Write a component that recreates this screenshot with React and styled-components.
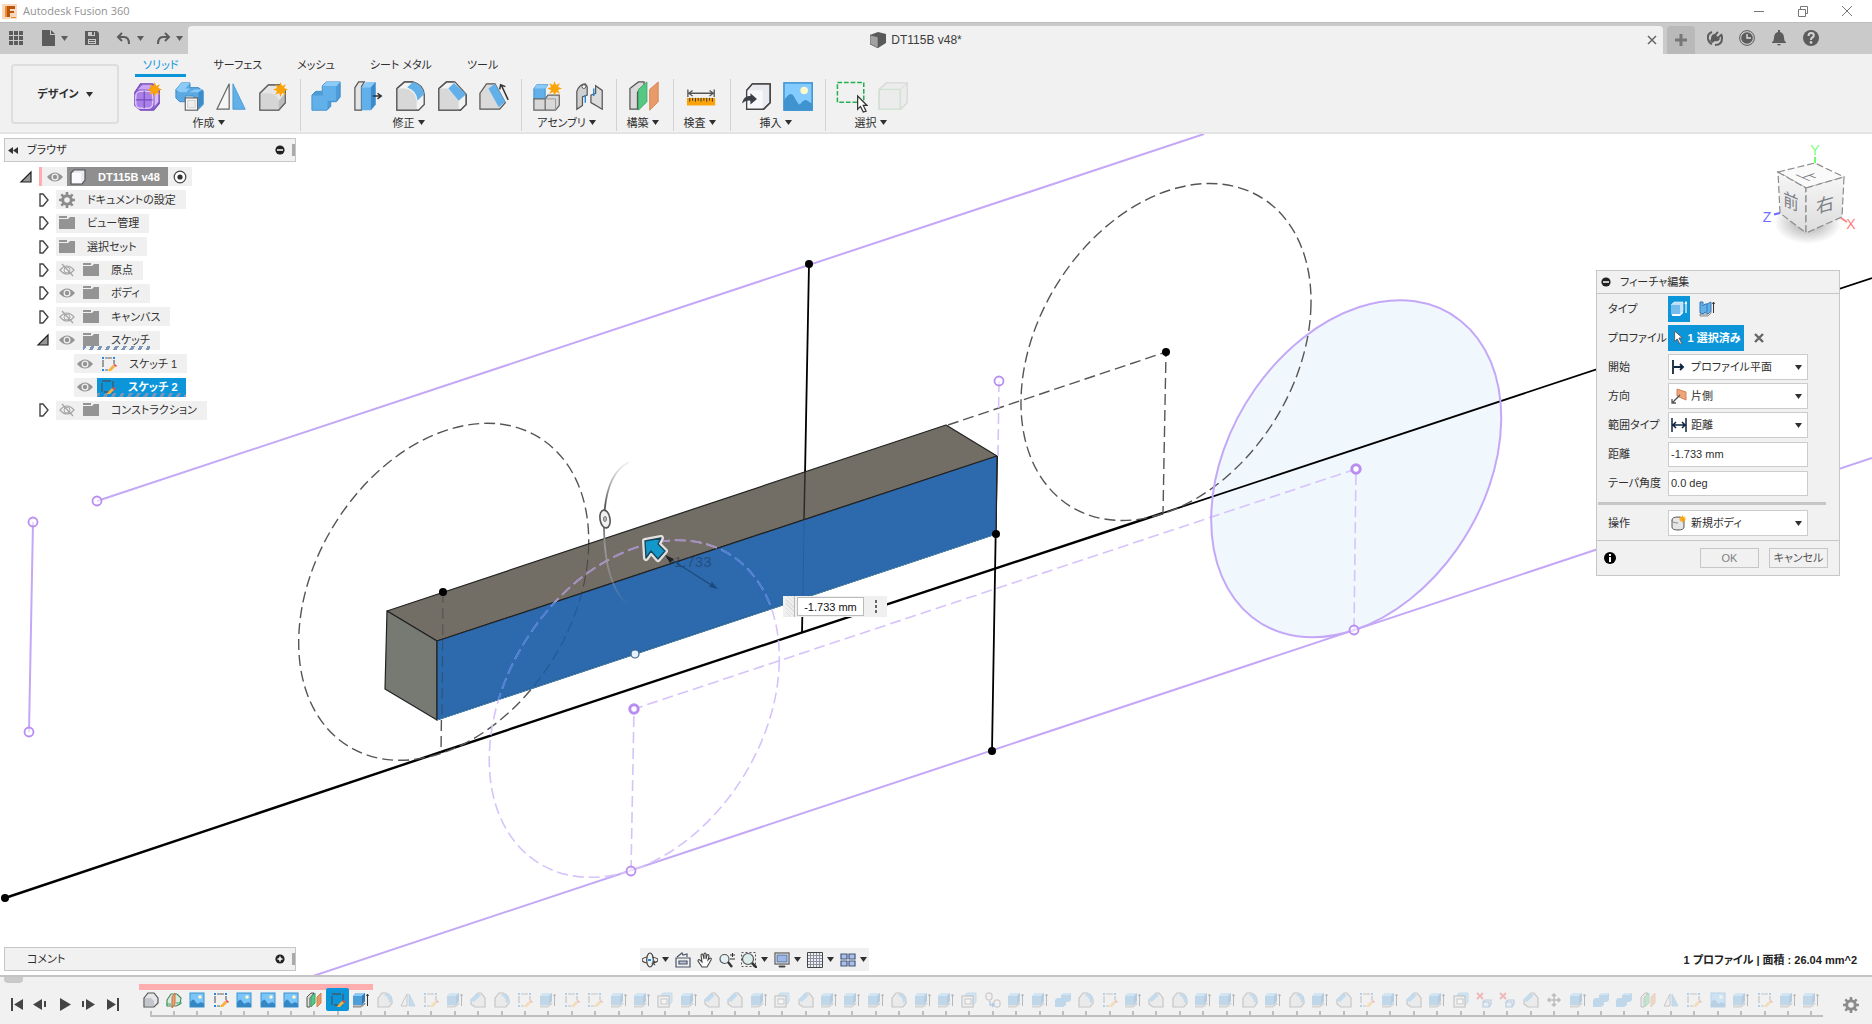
import React from "react";
import styled, { createGlobalStyle, css } from "styled-components";

const c = {
  blue: "#0c96d9",
  bar: "#cacaca",
  panel: "#f1f1f1",
  line: "#c6c6c6",
  text: "#2f2f2f",
  icon: "#5c5c5c",
  purple: "#c4a8f7",
  purpleDark: "#b98df2",
  pink: "#ffaeb0",
};

const Global = createGlobalStyle`
  *, *::before, *::after { box-sizing: border-box; }
  body {
    margin: 0;
    background: #fff;
    color: ${c.text};
    font: 11px/16px "Liberation Sans", "Noto Sans CJK JP", sans-serif;
    font-feature-settings: "palt";
  }
  button, input, select { font: inherit; color: inherit; font-feature-settings: inherit; }
  button { padding: 0; border: 0; background: none; display: inline-flex; align-items: center; justify-content: center; }
  svg { display: block; flex: none; }
`;

/* ---------- icons ---------- */

const Burst = ({ x, y, r }) => {
  const pts = Array.from({ length: 16 }, (_, i) => {
    const a = (i * Math.PI) / 8 - Math.PI / 2;
    const d = i % 2 ? r * 0.5 : r;
    return `${(x + d * Math.cos(a)).toFixed(2)},${(y + d * Math.sin(a)).toFixed(2)}`;
  });
  return <polygon points={pts.join(" ")} fill="#fba40a" />;
};

const big = {
  form: (
    <>
      <path d="M3 12 9 3h13l7 6v15l-6 7H9l-6-5z" fill="#8d5fd0" stroke="#7a4bbd" strokeWidth="1.200" />
      <path d="M6 9 11 4h11l-4 5z" fill="#c9a6f7" />
      <rect x="4" y="11" width="18" height="18" rx="5" fill="#a97fe8" stroke="#dcc6fb" strokeWidth="1.6" />
      <path d="M13 11v18M4 20h18" stroke="#7a4bbd" strokeWidth="1.3" />
      <path d="M24 13v14l4-5V12z" fill="#d7bdf9" />
      <Burst x={24} y={9} r={8} />
    </>
  ),
  derive: (
    <>
      <path d="M2 9 8 2h9v5h9l5 4v14l-5 5h-5V16h-9v6H6l-4-4z" fill="#5ba9e2" stroke="#3d8cca" />
      <path d="M2 9 8 2h9l-5 6h5l-4 4H6z" fill="#8ccaf8" />
      <path d="M16 12h10l5-3h-9z" fill="#8ccaf8" />
      <path d="M26 12v17l5-5V9z" fill="#3d8cca" />
      <rect x="12" y="18" width="13" height="13" fill="#fff" stroke="#666" strokeWidth="1.3" />
      <rect x="14.500" y="20.500" width="8" height="8" fill="#eee" stroke="#ccc" />
    </>
  ),
  mirror: (
    <>
      <path d="M14 3v27H1z" fill="#f6f6f6" stroke="#666" strokeWidth="1.3" />
      <path d="M18 3v27h13z" fill="#62b0e8" stroke="#4b9cd8" />
    </>
  ),
  newBody: (
    <>
      <path d="M2 13 11 4h12l6 6v13l-7 8H2z" fill="#e6e6e6" stroke="#666" strokeWidth="1.3" />
      <path d="M2 13h11q8 2 9 8v10H2z" fill="#d5d5d5" />
      <path d="M22 21l7-8v10l-7 8z" fill="#bcbcbc" />
      <path d="M2 13 11 4h12l6 6v13l-7 8H2z" fill="none" stroke="#666" strokeWidth="1.3" />
      <Burst x={24} y={9} r={8} />
    </>
  ),
  combine: (
    <>
      <path d="M1 15 5 11h7V5l4-4h15v16l-4 5h-6v5l-4 4H1z" fill="#4d9cd8" stroke="#3d8cca" />
      <path d="M1.500 15.500h11V6h14v15h-9v9.500h-16z" fill="#62b0ea" />
      <path d="M12 5.500 16 1h15l-4 4.500z" fill="#8ccaf8" />
    </>
  ),
  press: (
    <>
      <path d="M2 7 6 1h6L9 6v25H2z" fill="#e4e4e4" stroke="#555" strokeWidth="1.3" />
      <path d="M9 7 14 1h10v24l-5 6H9z" fill="#62b0ea" />
      <path d="M9 7 14 1h10l-5 6z" fill="#8ccaf8" />
      <path d="M19 7l5-6v24l-5 6z" fill="#3d8cca" />
      <path d="M21 16h8m-3-3 4 3-4 3" stroke="#333" strokeWidth="1.6" fill="none" />
    </>
  ),
  fillet: (
    <>
      <path d="M2 8 10 1h9q11 3 12 13v11l-6 6H2z" fill="#f3f3f3" stroke="#555" strokeWidth="1.3" />
      <path d="M2 8h9q11 3 12 13v10H2z" fill="#d8d8d8" />
      <path d="M13 7 19 1q11 3 12 13l-7 7Q23 10 13 7z" fill="#62b0ea" />
      <path d="M24 21l7-7v11l-6 6h-1z" fill="#f4f4f4" />
      <path d="M2 8 10 1h9M31 14v11l-6 6H2V8" fill="none" stroke="#555" strokeWidth="1.3" />
    </>
  ),
  chamfer: (
    <>
      <path d="M2 8 10 1h9l12 13v11l-6 6H2z" fill="#f3f3f3" stroke="#555" strokeWidth="1.3" />
      <path d="M2 8h9l12 13v10H2z" fill="#d8d8d8" />
      <path d="M12 8 18 2l13 12-8 7z" fill="#62b0ea" />
      <path d="M2 8 10 1h8M31 14v11l-6 6H2V8" fill="none" stroke="#555" strokeWidth="1.3" />
    </>
  ),
  draft: (
    <>
      <path d="M1 13 8 3h9l11 20-6 7H1z" fill="#dadada" stroke="#555" strokeWidth="1.3" />
      <path d="M10 8 17 3l11 19-7 6z" fill="#62b0ea" />
      <path d="M31 20 24 5m-2 4 1-5 5 2" fill="none" stroke="#333" strokeWidth="1.6" />
    </>
  ),
  component: (
    <>
      <path d="M2 8 5 4h12l-3 4v12H2z" fill="#62b0ea" stroke="#3d8cca" />
      <path d="M2 8 5 4h12l-3 4z" fill="#8ccaf8" />
      <path d="M2 19h12V31H2zM14 19l3-4h12v11l-4 5H14z" fill="#d8d8d8" stroke="#666" strokeWidth="1.3" />
      <path d="M14 19h11v12" fill="none" stroke="#999" />
      <Burst x={24} y={8} r={8} />
    </>
  ),
  joint: (
    <>
      <path d="M3 30V11q3-8 9-8l2 3v9l-5 2v9z" fill="#cfcfcf" stroke="#555" strokeWidth="1.3" />
      <circle cx="10.500" cy="6" r="2" fill="#fff" stroke="#555" />
      <path d="M30 30V10l-7-5v8l-5 2v8z" fill="#dcdcdc" stroke="#555" strokeWidth="1.3" />
      <path d="M12 15v8M21 8v8" stroke="#1e88e5" strokeWidth="1.5" />
    </>
  ),
  plane: (
    <>
      <path d="M1 8 10 1h6v4L9 12v18H1z" fill="#dadada" stroke="#555" strokeWidth="1.3" />
      <path d="M10 9 19 1v21l-9 9z" fill="#57c784" stroke="#39a968" />
      <path d="M22 9 31 1v21l-9 9z" fill="#e89b69" stroke="#d58351" />
    </>
  ),
  measure: (
    <>
      <path d="M2 9v8M30 9v8M3 13h26M7 10l-4 3 4 3M25 10l4 3-4 3" fill="none" stroke="#555" strokeWidth="1.4" />
      <rect x="1" y="18" width="30" height="8" fill="#fba40a" />
      <path d="M4 18v4M7 18v3M10 18v4M13 18v3M16 18v4M19 18v3M22 18v4M25 18v3M28 18v4" stroke="#333" />
    </>
  ),
  insert: (
    <>
      <path d="M6 10 12 3h19v20l-7 7H6z" fill="#e9eaf0" stroke="#444" strokeWidth="1.4" />
      <path d="M6 10h17v20H6z" fill="#f8f8fb" />
      <path d="M6 10 12 3h19v20l-7 7H6z" fill="none" stroke="#444" strokeWidth="1.4" />
      <path d="M1 24q2-9 9-8v-3l7 6-7 6v-4q-5-1-9 3z" fill="#3b3f46" />
    </>
  ),
  image: (
    <>
      <rect x="1" y="2" width="30" height="29" fill="#84cbff" stroke="#3b93d0" strokeWidth="1.600" />
      <circle cx="22.500" cy="10" r="4" fill="#fdf8c8" />
      <path d="M1 21Q8 9 12 17t6 8q5-7 8-4 3 2 5 3v7H1z" fill="#3f93cf" />
    </>
  ),
  select: (
    <>
      <rect x="1.500" y="1.500" width="28" height="21" fill="none" stroke="#23b04e" strokeWidth="1.600" strokeDasharray="5 2" />
      <path d="M23 16v14l3-3 3 6 3-1-3-6h4z" fill="#fff" stroke="#333" strokeWidth="1.300" />
    </>
  ),
  ghostBox: (
    <>
      <path d="M1 9 9 2h22v21l-7 7H1z" fill="#ececec" stroke="#d8d8d8" strokeWidth="1.400" />
      <path d="M24 9v21M24 9l7-7" stroke="#d8d8d8" />
      <rect x="1.500" y="9" width="22" height="21" fill="#ececec" stroke="#cfe3d3" strokeWidth="1.400" />
    </>
  ),
};

const small = {
  base: (
    <>
      <path d="M1 6 5 1h6l4 5v5l-4 4H1z" fill="#e4e6ea" stroke="#555" strokeWidth="1.200" />
      <path d="M2 6h6l3 3v5H2z" fill="#c3c6cc" />
    </>
  ),
  split: (
    <>
      <path d="M1 8 5 2h6l4 4-1 6-4 2H1z" fill="#d9ece0" stroke="#4b8c67" strokeWidth="1.200" />
      <path d="M6 5l3-4v11l-3 4z" fill="#e8a27a" stroke="#c9723d" />
      <path d="M0 12h5M10 11h6" stroke="#39a968" strokeWidth="1.200" />
    </>
  ),
  image: (
    <>
      <rect x="1" y="1" width="14" height="14" fill="#7cc5fb" stroke="#3b93d0" />
      <circle cx="11" cy="5" r="1.800" fill="#fdf8c8" />
      <path d="M1 11q3-6 5-2t4 2q3-2 5 1v3H1z" fill="#3487c4" />
    </>
  ),
  sketch: (
    <>
      <path d="M4 2h7M4 14h3M2 4v7M13 4v4" fill="none" stroke="#666" strokeWidth="1.200" />
      <path d="M1 1h2v2H1zM12 1h2v2h-2zM1 13h2v2H1z" fill="#1e88e5" />
      <path d="M7 15l1-2 4-4 2 2-4 4z" fill="#f7b13c" />
      <path d="M12 9l2-1 2 2-1 1z" fill="#e84a4a" />
    </>
  ),
  sketchOn: (
    <>
      <rect x="2" y="2" width="11" height="11" fill="none" stroke="#41596c" strokeWidth="1.300" strokeDasharray="9 2" />
      <path d="M7 15l1-2 4-4 2 2-4 4z" fill="#f7b13c" />
      <path d="M12 9l2-1 2 2-1 1z" fill="#e84a4a" />
    </>
  ),
  plane: (
    <>
      <path d="M1 5 5 1h3L4 6v9H1z" fill="#ddd" stroke="#555" />
      <path d="M5 5 9 1v10l-4 4z" fill="#57c784" stroke="#39a968" />
      <path d="M11 5 15 1v10l-4 4z" fill="#e89b69" stroke="#d58351" />
    </>
  ),
  extrude: (
    <>
      <path d="M0 14h8l4-3v1l-4 3H0z" fill="#ddd" stroke="#777" strokeWidth=".8" />
      <path d="M0 4 3 1h9v8l-3 4H0z" fill="#4e9ed9" />
      <path d="M0 4 3 1h9L9 4z" fill="#8ccaf8" />
      <path d="M9 4l3-3v8l-3 4z" fill="#3479b5" />
      <path d="M14.500 14V3M13.500 4l1-2 1 2" stroke="#333" fill="none" strokeWidth="1" />
    </>
  ),
  fillet: (
    <>
      <path d="M1 6 5 1h4q6 2 6 8v2l-3 4H1z" fill="#dcdcdc" stroke="#666" strokeWidth="1.200" />
      <path d="M7 3 10 1q5 2 5 8l-3 2q0-6-5-8z" fill="#5ba9e2" />
    </>
  ),
  chamfer: (
    <>
      <path d="M1 8 8 1h3l4 5v9H5l-4-3z" fill="#e0e0e0" stroke="#666" strokeWidth="1.200" />
      <path d="M0 8 7 1l4 2-7 7z" fill="#5ba9e2" />
    </>
  ),
  mirror: (
    <>
      <path d="M7 2v12H1z" fill="#eee" stroke="#666" />
      <path d="M9 2v12h6z" fill="#5ba9e2" stroke="#4b9cd8" />
    </>
  ),
  shell: (
    <>
      <path d="M4 3 6 1h9v9l-3 3V4z" fill="#8ccaf8" stroke="#4b9cd8" strokeWidth=".8" />
      <rect x="1" y="4" width="11" height="11" fill="#eee" stroke="#666" strokeWidth="1.200" />
      <rect x="4" y="7" width="6" height="5" fill="#fff" stroke="#666" />
    </>
  ),
  pattern: (
    <g fill="none" stroke="#555">
      <rect x="1" y="1" width="6" height="7" rx="2" />
      <rect x="9" y="8" width="6" height="7" rx="2" />
      <path d="M5 9v4h3M7 11l2 2-2 2" stroke="#1e74c8" strokeWidth="1.300" />
    </g>
  ),
  combine: (
    <>
      <path d="M0 8 2 6h4V3l3-2h7v7l-2 2h-3v3l-3 2H0z" fill="#4e9ed9" />
      <path d="M6 3l3-2h7l-2 2z" fill="#8ccaf8" />
    </>
  ),
  remove: (
    <>
      <path d="M1 1l6 6M7 1 1 7" stroke="#e33" strokeWidth="1.800" />
      <path d="M7 10l2-2h6v4l-2 3H7z" fill="#cfe6f8" stroke="#3d7fb5" strokeWidth="1.200" />
      <path d="M7 10h6v5" fill="none" stroke="#3d7fb5" />
    </>
  ),
  move: <path d="M8 2v12M2 8h12M6 4l2-2 2 2M6 12l2 2 2-2M4 6 2 8l2 2M12 6l2 2-2 2" fill="none" stroke="#444" strokeWidth="1.500" />,
  grid: <path d="M1 1h4v4H1zM6 1h4v4H6zM11 1h4v4h-4zM1 6h4v4H1zM6 6h4v4H6zM11 6h4v4h-4zM1 11h4v4H1zM6 11h4v4H6zM11 11h4v4h-4z" fill="#5c5c5c" />,
  file: <path d="M2 0h8v5h5v11H2zM11 0l4 4h-4z" fill="#5c5c5c" />,
  save: (
    <>
      <path d="M1 1h12l2 2v12H1z" fill="#5c5c5c" />
      <path d="M4 2h7v4H4zM4 9h8v5H4z" fill="#cacaca" />
      <path d="M8 2h2v3H8zM5 10h6v1H5zM5 12h6v1H5z" fill="#5c5c5c" />
    </>
  ),
  undo: <path d="M6 3 2 7l4 4M2 7h6q5 0 5 7" fill="none" stroke="#5c5c5c" strokeWidth="2" />,
  redo: <path d="M10 3l4 4-4 4M14 7H8q-5 0-5 7" fill="none" stroke="#5c5c5c" strokeWidth="2" />,
  cubeDark: (
    <>
      <path d="M0 3 8 0l8 2v9l-8 5-8-4z" fill="#5a5a5a" />
      <path d="M0 3l8 2v11l-8-4z" fill="#a2a2a2" stroke="#555" strokeWidth=".6" />
    </>
  ),
  close: <path d="M4 4l8 8M12 4l-8 8" stroke="#666" strokeWidth="1.500" />,
  clear: <path d="M4 4l8 8M12 4l-8 8" stroke="#666" strokeWidth="2.400" />,
  plus: <path d="M8 2v12M2 8h12" stroke="#777" strokeWidth="3" />,
  plug: (
    <>
      <path d="M5 2Q0 4 1 9q1 4 4 5M8 15q7 0 7-7 0-2-1-4" fill="none" stroke="#5c5c5c" strokeWidth="2" />
      <path d="M4 9q0-5 4-5l5 5q-2 3-5 2l-3 2-2-2z" fill="#5c5c5c" />
      <path d="M8 5l3-3M11 8l3-3" stroke="#5c5c5c" strokeWidth="1.800" />
    </>
  ),
  clock: (
    <>
      <circle cx="8" cy="8" r="7.400" fill="none" stroke="#5c5c5c" />
      <circle cx="8" cy="8" r="5.800" fill="#5c5c5c" />
      <path d="M8 4v4h4" fill="none" stroke="#ddd" strokeWidth="1.400" />
    </>
  ),
  bell: <path d="M7 0h2v2q4 1 4 6 0 3 2 4v1H1v-1q2-1 2-4 0-5 4-6zM6 14h4q-2 3-4 0z" fill="#5c5c5c" />,
  help: (
    <>
      <circle cx="8" cy="8" r="8" fill="#5c5c5c" />
      <path d="M5.500 6q0-3 2.700-3 2.600 0 2.600 2.400 0 1.300-1.400 2T8 10" fill="none" stroke="#d5d5d5" strokeWidth="2" />
      <circle cx="8" cy="12.400" r="1.300" fill="#d5d5d5" />
    </>
  ),
  min: <path d="M3 8.500h10" stroke="#777" />,
  restore: <path d="M3.500 6.500h7v7h-7zM5.500 6V3.500h7v7H11" fill="none" stroke="#777" />,
  winClose: <path d="M3 3l10 10M13 3 3 13" stroke="#777" />,
  eye: (
    <>
      <path d="M0 8q8-9 16 0-8 9-16 0z" fill="#949494" />
      <circle cx="8" cy="8" r="3.500" fill="#f0f0f0" />
      <circle cx="8" cy="8" r="2.200" fill="#949494" />
    </>
  ),
  eyeOff: (
    <>
      <path d="M1 8q7-8 14 0-7 8-14 0z" fill="none" stroke="#a5a5a5" strokeWidth="1.200" />
      <circle cx="8" cy="8" r="3" fill="none" stroke="#a5a5a5" />
      <path d="M3 2l11 12" stroke="#a5a5a5" strokeWidth="1.300" />
    </>
  ),
  folder: <path d="M0 1h8v2H0zM0 4h9l2-2h5v12H0z" fill="#949494" />,
  box: (
    <>
      <path d="M1 4 4 1h11v10l-3 4H1z" fill="#e9ebf2" stroke="#555" strokeWidth="1.200" />
      <rect x="2" y="4" width="9" height="10" fill="#fafafc" />
    </>
  ),
  gear: (
    <>
      <circle cx="8" cy="8" r="4.300" fill="none" stroke="#8c8c8c" strokeWidth="3" />
      <path d="M8 0v4M8 12v4M0 8h4M12 8h4M2.300 2.300l2.500 2.500M11.200 11.200l2.500 2.500M2.300 13.700l2.500-2.500M11.200 4.800l2.500-2.500" stroke="#8c8c8c" strokeWidth="2.600" />
    </>
  ),
  closed: <path d="M5 2h3l5 6-5 6H5z" fill="#fff" stroke="#444" strokeWidth="1.400" />,
  open: <path d="M13 3v10H3z" fill="#999" stroke="#222" strokeWidth="1.200" />,
  radio: (
    <>
      <circle cx="8" cy="8" r="5.800" fill="#fff" stroke="#444" strokeWidth="1.200" />
      <circle cx="8" cy="8" r="2.600" fill="#333" />
    </>
  ),
  rewind: <path d="M8 5v7L3 8.500zM13 5v7L8 8.500z" fill="#333" />,
  minus: (
    <>
      <circle cx="8" cy="8" r="4.600" fill="#222" />
      <path d="M5 8h6" stroke="#fff" strokeWidth="1.500" />
    </>
  ),
  add: (
    <>
      <circle cx="8" cy="8" r="4.600" fill="#222" />
      <path d="M5.500 8h5M8 5.500v5" stroke="#fff" strokeWidth="1.500" />
    </>
  ),
  info: (
    <>
      <circle cx="8" cy="8" r="6" fill="#000" />
      <path d="M7 4h2v2H7zM7 7h2v5H7z" fill="#fff" />
    </>
  ),
  start: <path d="M2 1v14M3 8h9M9 5l3 3-3 3" fill="none" stroke="#0f2540" strokeWidth="1.800" />,
  direction: (
    <>
      <path d="M6 1l9 3v8L6 8z" fill="#eda57c" stroke="#d58351" />
      <path d="M9 7 1 15M1 11v4h4" fill="none" stroke="#555" strokeWidth="1.300" />
    </>
  ),
  extent: <path d="M1 1v14M15 1v14M2 8h12M5 5 2 8l3 3M11 5l3 3-3 3" fill="none" stroke="#0f2540" strokeWidth="1.500" />,
  body: (
    <>
      <path d="M1 5q0-3 6-3t6 3v7q0 3-6 3t-6-3z" fill="#e6e6e6" stroke="#555" />
      <path d="M1 5q0 3 6 3" fill="none" stroke="#888" />
      <Burst x={11.5} y={4} r={4} />
    </>
  ),
  cursor: <path d="M3 0v12l3-3 3 6 2-1-3-6h4z" fill="#fff" stroke="#555" />,
  thin: (
    <>
      <path d="M1 13h8l3-3v2l-3 3H1z" fill="#ddd" stroke="#777" strokeWidth=".8" />
      <path d="M1 1h3v4l2-2h2l4-2v9l-3 3-3-2-2 2-3-1z" fill="#62b0ea" stroke="#3479b5" />
      <path d="M8 3v8" stroke="#3479b5" />
      <path d="M14.500 12V2M13.500 3l1-2 1 2" stroke="#333" fill="none" />
    </>
  ),
  extrudeOn: (
    <>
      <path d="M1 13h8l3-3v2l-3 3H1z" fill="#fff" />
      <path d="M0 4 3 1h9v9l-3 3H0z" fill="#bfe0f8" stroke="#e9f5fd" strokeWidth=".6" />
      <path d="M0 4h9v9H0z" fill="#74bbee" />
      <path d="M15 12V2M14 3l1-2 1 2" stroke="#fff" fill="none" strokeWidth="1.200" />
    </>
  ),
  first: <path d="M2 2h2v13H2zM14 3v11L5 8.500z" fill="#444" />,
  back: <path d="M9 3v11L0 8.500zM11 5h2v6h-2z" fill="#444" />,
  play: <path d="M3 2v13l11-6.500z" fill="#444" />,
  next: <path d="M5 3v11l9-5.500zM1 5h2v6H1z" fill="#444" />,
  last: <path d="M12 2h2v13h-2zM2 3v11l9-5.500z" fill="#444" />,
  orbit: (
    <g fill="none" stroke="#444" strokeWidth="1.200">
      <ellipse cx="8" cy="8" rx="3.300" ry="7" />
      <path d="M5 5Q0 6 0 8t5 3M10 5q6 1 6 3t-5 3l2-2M11 11l2 2" />
      <path d="M6 7h3v2H6z" fill="#1e88e5" stroke="none" />
    </g>
  ),
  camera: (
    <g fill="none" stroke="#4a5568" strokeWidth="1.200">
      <path d="M1 6h14v9H1zM2 5l5-4 1 2 4-1v3" />
      <path d="M4 9h8v3H4z" fill="#b9c2d0" />
    </g>
  ),
  hand: <path d="M5 15 1 9q0-2 2-1l2 2-1-7q1-2 2 0l1 4V2q1-2 2 0v5l1-4q2-1 2 1l-1 4 2-2q2 0 1 2l-4 7z" fill="#fff" stroke="#444" strokeWidth="1.100" />,
  zoom: (
    <>
      <circle cx="5.500" cy="7" r="4.500" fill="#e4f1f6" stroke="#555" strokeWidth="1.200" />
      <path d="M9 10l4 5" stroke="#333" strokeWidth="2.400" />
      <path d="M11 3h5M13.500 1v4M11 7h5" stroke="#333" />
    </>
  ),
  zoomWindow: (
    <>
      <rect x=".5" y=".5" width="14" height="14" fill="none" stroke="#555" strokeDasharray="2 2" />
      <circle cx="7" cy="7" r="5.500" fill="#d9edea" stroke="#555" strokeWidth="1.200" />
      <path d="M11 11l5 5" stroke="#333" strokeWidth="2.600" />
    </>
  ),
  display: (
    <>
      <rect x="1" y="1" width="14" height="11" fill="#fff" stroke="#555" strokeWidth="1.200" />
      <rect x="3" y="3" width="10" height="7" fill="#9db8e6" stroke="#55709c" />
      <path d="M5 14h6v1H5z" stroke="#555" />
    </>
  ),
  gridNav: (
    <>
      <path d="M3.500 1v14M6.500 1v14M9.500 1v14M12.500 1v14M1 3.500h14M1 6.500h14M1 9.500h14M1 12.500h14" stroke="#8a8fa0" />
      <path d="M.5.500h15v15H.5z" fill="none" stroke="#444" />
    </>
  ),
  views: <path d="M1 2h6v5H1zM9 2h6v5H9zM1 9h6v5H1zM9 9h6v5H9z" fill="#a9c0ea" stroke="#44587e" strokeWidth="1.200" />,
};

const Icon = ({ name, size = 16 }) => (
  <svg width={size} height={size} viewBox="0 0 16 16" aria-hidden="true">{small[name]}</svg>
);
const BigIcon = ({ name }) => (
  <svg width="32" height="32" viewBox="0 0 34 34" aria-hidden="true">{big[name]}</svg>
);
const Caret = () => (
  <svg width="7" height="5" viewBox="0 0 7 5" aria-hidden="true"><path d="M0 0h7L3.500 5z" fill="currentColor" /></svg>
);

/* ---------- frame ---------- */

const Page = styled.div`
  display: flex;
  flex-direction: column;
  height: 100vh;
  overflow: hidden;
`;

const TitleBar = styled.header`
  display: flex;
  align-items: center;
  height: 22px;
  padding: 0 3px 0 2px;
  color: #929292;
  font-family: "Open Sans", sans-serif;
`;
const AppMark = styled.svg`
  width: 15px;
  height: 15px;
`;
const AppName = styled.h1`
  flex: 1;
  margin: 0 0 0 6px;
  font-size: 11px;
  font-weight: 400;
`;
const WindowButton = styled.button`
  width: 44px;
  height: 20px;
`;

const DocumentBar = styled.div`
  display: flex;
  align-items: stretch;
  height: 32px;
  padding-top: 3px;
  background: ${c.bar};
  border-top: 1px solid #bdbdbd;
  color: ${c.icon};
`;
const QuickAccess = styled.div`
  display: flex;
  align-items: center;
  gap: 16px;
  width: 188px;
  padding: 0 0 4px 8px;
`;
const QuickPair = styled.div`
  display: flex;
  gap: 11px;
`;
const QuickButton = styled.button`
  gap: 5px;
`;
const DocumentTab = styled.div`
  flex: 1;
  display: flex;
  align-items: center;
  padding-right: 3px;
  background: ${c.panel};
  border-radius: 4px 4px 0 0;
`;
const DocumentName = styled.div`
  flex: 1;
  display: flex;
  align-items: center;
  justify-content: center;
  gap: 5px;
  font-size: 12px;
  color: #3c3c3c;
`;
const NewTab = styled.button`
  width: 28px;
  margin: 0 12px 0 4px;
  background: #b9b9b9;
  border-radius: 4px 4px 0 0;
`;
const AccountTools = styled.div`
  display: flex;
  align-items: center;
  gap: 16px;
  padding: 0 53px 4px 0;
`;

const Ribbon = styled.section`
  display: flex;
  height: 80px;
  padding: 1px 11px 0;
  background: ${c.panel};
  border-bottom: 2px solid #e4e4e4;
`;
const Workspace = styled.button`
  gap: 7px;
  width: 108px;
  height: 60px;
  margin-top: 9px;
  border: 2px solid #dedede;
  border-radius: 4px;
  font-weight: 700;
`;
const RibbonMain = styled.div`
  display: flex;
  flex-direction: column;
  padding-left: 3px;
`;
const TabList = styled.nav`
  display: flex;
  gap: 19px;
  padding-left: 13px;
`;
const RibbonTab = styled.button`
  height: 22px;
  padding: 0 8px;
  border-bottom: 3px solid ${(p) => (p.$on ? c.blue : "transparent")};
  color: ${(p) => (p.$on ? c.blue : c.text)};
`;
const Groups = styled.div`
  display: flex;
  padding-top: 2px;
`;
const Group = styled.div`
  display: flex;
  flex-direction: column;
  align-items: center;
  min-width: 57px;
  height: 52px;
  padding: 0 5px;
  & + & { border-left: 1px solid #d2d2d2; }
`;
const Tools = styled.div`
  display: flex;
`;
const Tool = styled.button`
  width: 42px;
  height: 35px;
`;
const GroupMenu = styled.button`
  gap: 3px;
  height: 17px;
  padding-right: 5px;
`;

/* ---------- canvas ---------- */

const Canvas = styled.main`
  position: relative;
  flex: 1;
  min-height: 0;
`;
const Scene = styled.svg`
  position: absolute;
  inset: 0;
  width: 100%;
  height: 100%;
`;
const Dock = styled.aside`
  position: absolute;
  left: 4px;
  width: 292px;
  ${(p) => (p.$bottom ? css`bottom: 4px;` : css`top: 4px;`)}
`;
const DockHeader = styled.div`
  display: flex;
  align-items: center;
  height: 24px;
  background: ${c.panel};
  border: 1px solid ${c.line};
`;
const DockTitle = styled.h2`
  flex: 1;
  margin: 0;
  padding-left: ${(p) => (p.$indent ? "22px" : "6px")};
  font-size: 11px;
  font-weight: 400;
`;
const Grip = styled.span`
  width: 3px;
  height: 12px;
  margin-left: 4px;
  border: 1px solid #aaa;
  border-right-width: 2px;
`;
const Tree = styled.ul`
  display: flex;
  flex-direction: column;
  justify-content: space-between;
  height: 253px;
  margin: 5px 0 0;
  padding: 0;
  list-style: none;
`;
const TreeRow = styled.li`
  display: flex;
  align-items: center;
  height: 19px;
  padding-left: ${(p) => p.$indent}px;
`;
const Chip = styled.div`
  display: flex;
  align-items: center;
  gap: ${(p) => (p.$flush ? 4 : 8)}px;
  height: 19px;
  margin-left: 5px;
  padding: 0 ${(p) => (p.$flush ? 0 : 10)}px 0 3px;
  background: #f0f0f0;
  ${(p) => p.$edited && css`
    padding: 0 4px 0 5px;
    border-left: 3px solid ${c.pink};
  `}
`;
const ItemName = styled.span`
  display: flex;
  align-items: center;
  gap: 12px;
  height: 19px;
  color: ${(p) => (p.$tone ? "#fff" : "#333")};
  background: ${(p) => p.$tone || "none"};
  font-weight: ${(p) => (p.$tone ? 700 : 400)};
  padding: ${(p) => (p.$tone ? "0 8px 0 3px" : 0)};
  ${(p) => p.$hatched && css`
    background-image: repeating-linear-gradient(120deg, #7f95b8 0 3px, transparent 3px 7px);
    background-size: 100% 4px;
    background-position: 0 100%;
    background-repeat: no-repeat;
  `}
`;

const ValueEditor = styled.div`
  position: absolute;
  left: 783px;
  top: 462px;
  display: flex;
  align-items: center;
  width: 104px;
  height: 21px;
  padding-left: 3px;
  background: #f0f0f0;
`;
const ValueHandle = styled.span`
  width: 9px;
  height: 21px;
  margin-right: 2px;
  border-right: 1px solid #bbb;
  background: repeating-linear-gradient(45deg, #ddd 0 1px, #f0f0f0 1px 3px);
`;
const ValueInput = styled.input`
  width: 67px;
  height: 19px;
  margin-right: 10px;
  padding: 0;
  border: 1px solid #bbb;
  background: #fff;
  color: #111;
  text-align: center;
`;

const Dialog = styled.form`
  position: absolute;
  top: 136px;
  right: 32px;
  width: 244px;
  background: ${c.panel};
  border: 1px solid ${c.line};
`;
const DialogTitle = styled.h2`
  display: flex;
  align-items: center;
  gap: 6px;
  height: 23px;
  margin: 0;
  padding-left: 1px;
  border-bottom: 1px solid ${c.line};
  font-size: 11px;
  font-weight: 400;
`;
const Fields = styled.div`
  display: flex;
  flex-direction: column;
  gap: 3px;
  padding: ${(p) => (p.$tight ? "5px 0 4px" : "2px 0 6px")};
`;
const Field = styled.div`
  display: grid;
  grid-template-columns: 60px 140px;
  align-items: center;
  height: 26px;
  padding-left: 11px;
`;
const Controls = styled.div`
  display: flex;
  align-items: center;
`;
const TypeButton = styled.button`
  width: 22px;
  height: 26px;
  margin-right: 6px;
  background: ${(p) => (p.$on ? c.blue : "none")};
`;
const PickButton = styled.button`
  gap: 2px;
  width: 76px;
  height: 26px;
  margin-right: 7px;
  color: #fff;
  font-weight: 700;
  background: ${c.blue};
`;
const SelectBox = styled.div`
  display: flex;
  align-items: center;
  gap: 4px;
  height: 26px;
  padding: 0 5px 0 2px;
  background: #fff;
  border: 1px solid #ccc;
`;
const Select = styled.select`
  flex: 1;
  min-width: 0;
  padding: 0;
  border: 0;
  background: none;
  appearance: none;
`;
const TextInput = styled.input`
  width: 140px;
  height: 25px;
  padding: 0 2px;
  border: 1px solid #ccc;
  background: #fff;
`;
const Divider = styled.hr`
  height: 3px;
  margin: 0 13px 0 1px;
  border: 0;
  background: ${c.line};
`;
const DialogFooter = styled.footer`
  display: flex;
  align-items: center;
  gap: 10px;
  height: 35px;
  padding: 0 11px 0 5px;
  border-top: 1px solid ${c.line};
`;
const Spacer = styled.span`
  flex: 1;
`;
const PushButton = styled.button`
  width: 59px;
  height: 20px;
  border: 1px solid ${c.line};
  color: ${(p) => (p.disabled ? "#808080" : "#555")};
`;

const NavBar = styled.div`
  position: absolute;
  left: 640px;
  bottom: 4px;
  display: flex;
  align-items: center;
  gap: 6px;
  height: 23px;
  padding: 0 2px;
  background: #f0f0f0;
`;
const NavButton = styled.button`
  gap: 4px;
`;
const Status = styled.output`
  position: absolute;
  right: 15px;
  bottom: 7px;
  font-weight: 700;
  color: #222;
`;

/* ---------- timeline ---------- */

const Timeline = styled.footer`
  position: relative;
  display: flex;
  height: 49px;
  background: ${c.panel};
  border-top: 2px solid #c4c4c4;
`;
const Handle = styled.span`
  position: absolute;
  left: 4px;
  top: 0;
  width: 19px;
  height: 6px;
  background: ${c.bar};
  border-radius: 0 0 4px 4px;
`;
const Player = styled.div`
  display: flex;
  align-items: center;
  gap: 8px;
  width: 139px;
  padding: 6px 0 0 9px;
`;
const Track = styled.ol`
  flex: 1;
  display: flex;
  margin: 0;
  padding: 7px 0 0;
  list-style: none;
`;
const Step = styled.li`
  flex: 1;
  min-width: 0;
  display: flex;
  flex-direction: column;
  align-items: center;
  height: 33px;
  border-top: 6px solid ${(p) => (p.$edited ? c.pink : "transparent")};
  background: linear-gradient(#bfbfbf, #bfbfbf) ${(p) => (p.$first ? "right" : "left")} bottom / ${(p) => (p.$first ? "50%" : "100%")} 2px no-repeat;
  &::after { content: ""; width: 2px; height: 6px; margin-top: auto; background: #bfbfbf; }
`;
const StepButton = styled.button`
  width: 23px;
  height: 23px;
  margin-top: -2px;
  opacity: ${(p) => (p.$later ? 0.3 : 1)};
  background: ${(p) => (p.$on ? c.blue : "none")};
  border-radius: 2px;
`;
const Settings = styled.button`
  width: 49px;
  padding: 9px 0 0 6px;
`;

/* ---------- data ---------- */

const tabs = ["ソリッド", "サーフェス", "メッシュ", "シート メタル", "ツール"];
const groups = [
  ["作成", ["form", "derive", "mirror", "newBody"]],
  ["修正", ["combine", "press", "fillet", "chamfer", "draft"]],
  ["アセンブリ", ["component", "joint"]],
  ["構築", ["plane"]],
  ["検査", ["measure"]],
  ["挿入", ["insert", "image"]],
  ["選択", ["select", "ghostBox"]],
];
const tree = [
  { indent: 35, icons: ["gear"], name: "ドキュメントの設定" },
  { indent: 35, icons: ["folder"], name: "ビュー管理" },
  { indent: 35, icons: ["folder"], name: "選択セット" },
  { indent: 35, icons: ["eyeOff", "folder"], name: "原点" },
  { indent: 35, icons: ["eye", "folder"], name: "ボディ" },
  { indent: 35, icons: ["eyeOff", "folder"], name: "キャンバス" },
  { indent: 35, icons: ["eye", "folder"], name: "スケッチ", open: true, hatched: true },
  { indent: 65, icons: ["eye", "sketch"], name: "スケッチ 1", leaf: true },
  { indent: 65, icons: ["eye", "sketchOn"], name: "スケッチ 2", leaf: true, tone: c.blue, hatched: true },
  { indent: 35, icons: ["eyeOff", "folder"], name: "コンストラクション" },
];
const codes = {
  b: "base", s: "split", i: "image", k: "sketch", p: "plane", K: "sketchOn", e: "extrude", f: "fillet",
  m: "mirror", c: "chamfer", h: "shell", t: "pattern", j: "combine", x: "remove", v: "move",
};
const steps = [..."bsikiiipKefmkecfkekkeeheccehceeefeehteejfkecfeefefeckeceh" + "xxcvejjpmkiekee"].map((k) => codes[k]);
const nav = [
  ["orbit", true], ["camera"], ["hand"], ["zoom"], ["zoomWindow", true], ["display", true], ["gridNav", true], ["views", true],
];

/* A circle seen in the sketch plane: centre plus its two projected radii. */
const ringPath = (x, y) => {
  const u = [145, -48];
  const v = [-2.5, 161.5];
  const k = 0.5523;
  const at = (a, b) => `${(x + a * u[0] + b * v[0]).toFixed(1)} ${(y + a * u[1] + b * v[1]).toFixed(1)}`;
  return `M${at(1, 0)}C${at(1, k)} ${at(k, 1)} ${at(0, 1)}C${at(-k, 1)} ${at(-1, k)} ${at(-1, 0)}C${at(-1, -k)} ${at(-k, -1)} ${at(0, -1)}C${at(k, -1)} ${at(1, -k)} ${at(1, 0)}`;
};

const Model = () => (
  <Scene viewBox="0 134 1872 841" preserveAspectRatio="xMidYMid slice" role="img" aria-label="DT115B v48">
    <defs>
      <linearGradient id="fade" x1="0" y1="0" x2="0" y2="1">
        <stop offset="0" stopColor="#888" stopOpacity="0.1" />
        <stop offset=".3" stopColor="#555" />
        <stop offset=".6" stopColor="#999" />
        <stop offset="1" stopColor="#aaa" stopOpacity="0" />
      </linearGradient>
      <linearGradient id="cubeFace" x1="0" y1="0" x2="0" y2="1">
        <stop offset="0" stopColor="#f6f6f6" />
        <stop offset="1" stopColor="#dcdcdc" />
      </linearGradient>
      <radialGradient id="cubeShade">
        <stop offset="0" stopColor="#888" stopOpacity=".8" />
        <stop offset="1" stopColor="#888" stopOpacity="0" />
      </radialGradient>
      <clipPath id="onTop"><path d="M387 611 946 425 997 456 437 641z" /></clipPath>
      <clipPath id="onFront"><path d="M437 641 997 456 996 534 437 720z" /></clipPath>
    </defs>

    <path d={ringPath(1356.2, 468.8)} fill="#f0f8fe" />
    <path d="M97 501 1204 134M33 522 29 732M313 976 1872 458" fill="none" stroke={c.purple} strokeWidth="2" />
    <g fill="none" stroke="#000">
      <path d="M5 898 441 752" strokeWidth="2.400" />
      <path d="M441 752 1163 513" strokeWidth="2.400" />
      <path d="M1163 513 1872 278" strokeWidth="1.800" />
      <path d="M809 264 802 633M997 456 992 751" strokeWidth="1.800" />
    </g>
    <g fill="none" stroke="#555" strokeWidth="1.400" strokeDasharray="11 5">
      <path d={ringPath(1166, 352)} />
      <path d={ringPath(443.7, 591.8)} />
      <path d="M948 425 1166 352 1163 513M443 592 441 752" />
    </g>

    <g stroke="#222" strokeWidth="1.200" strokeLinejoin="round">
      <path d="M387 611 946 425 997 456 437 641z" fill="#726d65" />
      <path d="M387 611 437 641V720L385 689z" fill="#777973" />
      <path d="M437 641 997 456 996 534 437 720z" fill="#2c6aad" />
    </g>
    <path d="M437 720 996 534" stroke="#3f8fd0" />
    <path d="M805 472 804 520" stroke="#2c2b29" strokeWidth="1.500" />
    <path d="M804 520 803 598" stroke="#275f9c" />
    <g fill="none" strokeWidth="1.200" strokeDasharray="11 5">
      <path d="M443 592 442 717" stroke="#333" strokeOpacity=".4" />
      <path d={ringPath(443.7, 591.8)} stroke="#333" strokeOpacity=".6" clipPath="url(#onTop)" />
      <path d={ringPath(443.7, 591.8)} stroke="#1d4f87" strokeOpacity=".6" clipPath="url(#onFront)" />
    </g>

    <g fill="none" strokeDasharray="11 5">
      <g stroke="#d6c3fb" strokeWidth="1.600">
        <path d={ringPath(634.3, 708.8)} />
        <path d="M631 871 634 709 1356 469 1354 630M999 381 998 456" />
      </g>
      <path d={ringPath(634.3, 708.8)} stroke="#a28fc0" strokeWidth="1.800" clipPath="url(#onTop)" />
      <path d={ringPath(634.3, 708.8)} stroke="#4c7fd4" strokeWidth="1.800" clipPath="url(#onFront)" />
    </g>
    <path d={ringPath(1356.2, 468.8)} fill="none" stroke={c.purple} strokeWidth="2" />

    <g>
      {[[5, 898], [809, 264], [1166, 352], [443, 592], [996, 534], [992, 751]].map(([x, y]) => (
        <circle key={`${x}-${y}`} cx={x} cy={y} r="4" fill="#000" />
      ))}
      {[[97, 501], [33, 522], [29, 732], [999, 381], [1354, 630], [631, 871]].map(([x, y]) => (
        <circle key={`${x}-${y}`} cx={x} cy={y} r="4.500" fill="#fff" fillOpacity=".6" stroke={c.purpleDark} strokeWidth="1.800" />
      ))}
      {[[1356, 469], [634, 709]].map(([x, y]) => (
        <circle key={`${x}-${y}`} cx={x} cy={y} r="4.200" fill="#fff" stroke={c.purpleDark} strokeWidth="3" />
      ))}
      <circle cx="635" cy="654" r="4" fill="#e4f2ff" stroke="#41638c" strokeWidth="1.200" />
    </g>

    <path d="M629 462Q603 475 604 530T628 605" fill="none" stroke="url(#fade)" strokeWidth="1.800" />
    <ellipse cx="605" cy="519" rx="5" ry="9" transform="rotate(-10 605 519)" fill="#f0f0f0" stroke="#555" strokeWidth="1.600" />
    <ellipse cx="605" cy="519" rx="1.500" ry="2.500" fill="#bbb" stroke="#777" />
    <path d="M667 557 716 588" stroke="#1c4a80" strokeWidth="1.200" />
    <path d="M718 589 709 587 712 582z" fill="#1c4a80" />
    <path d="M665 555 674 559 670 563z" fill="#222" />
    <text x="669" y="567" fontSize="15" fill="#1e3350" fillOpacity=".5">-1.733</text>
    <path d="M645 541 661 538 658 544 665 551 658 559 651 551 646 558z" fill="#1398cb" stroke="#e4e2de" strokeWidth="6" strokeLinejoin="round" />
    <path d="M645 541 661 538 658 544 665 551 658 559 651 551 646 558z" fill="#1398cb" stroke="#174560" strokeWidth="1.400" strokeLinejoin="round" />

    <ellipse cx="1808" cy="222" rx="34" ry="22" fill="url(#cubeShade)" />
    <g stroke="#8b8b8b" strokeDasharray="7 3" strokeWidth="1.200">
      <path d="M1778 172 1815 163 1844 177 1806 188z" fill="#fafafa" />
      <path d="M1778 172 1806 188V233L1780 213z" fill="url(#cubeFace)" />
      <path d="M1806 188 1844 177 1842 217 1806 233z" fill="url(#cubeFace)" />
    </g>
    <path d="M1815 157v6" stroke="#6dfc6d" strokeWidth="2" />
    <path d="M1774 214.500 1780 213" stroke="#6a6aff" strokeWidth="2" />
    <path d="M1841 218 1847 222" stroke="#ff8585" strokeWidth="2" />
    <g fontFamily="Liberation Sans, Noto Sans CJK JP, sans-serif" textAnchor="middle">
      <g fill="#7b7f86" fontSize="18">
        <text transform="matrix(.85 .35 0 1 1791 208)">前</text>
        <text transform="matrix(1 -.3 0 1 1825 211)">右</text>
        <text transform="matrix(.9 .4 -.85 .3 1803 178)" fontSize="17">上</text>
      </g>
      <text x="1815" y="155" fontSize="14" fill="#7dfb7d">Y</text>
      <text x="1767" y="222" fontSize="14" fill="#6f6fff">Z</text>
      <text x="1851" y="229" fontSize="14" fill="#ff7d7d">X</text>
    </g>
  </Scene>
);

const SelectField = ({ id, label, icon, value }) => (
  <Field>
    <label htmlFor={id}>{label}</label>
    <SelectBox>
      <Icon name={icon} />
      <Select id={id} defaultValue={value}><option>{value}</option></Select>
      <Caret />
    </SelectBox>
  </Field>
);

const FeatureDialog = () => (
  <Dialog onSubmit={(e) => e.preventDefault()}>
    <DialogTitle><Icon name="minus" />フィーチャ編集</DialogTitle>
    <Fields>
      <Field>
        <span>タイプ</span>
        <Controls>
          <TypeButton type="button" $on aria-label="押し出し"><Icon name="extrudeOn" /></TypeButton>
          <TypeButton type="button" aria-label="薄い押し出し"><Icon name="thin" /></TypeButton>
        </Controls>
      </Field>
      <Field>
        <span>プロファイル</span>
        <Controls>
          <PickButton type="button"><Icon name="cursor" size={14} />1 選択済み</PickButton>
          <button type="button" aria-label="クリア"><Icon name="clear" /></button>
        </Controls>
      </Field>
      <SelectField id="start" label="開始" icon="start" value="プロファイル平面" />
      <SelectField id="direction" label="方向" icon="direction" value="片側" />
      <SelectField id="extent" label="範囲タイプ" icon="extent" value="距離" />
      <Field>
        <label htmlFor="distance">距離</label>
        <TextInput id="distance" defaultValue="-1.733 mm" />
      </Field>
      <Field>
        <label htmlFor="taper">テーパ角度</label>
        <TextInput id="taper" defaultValue="0.0 deg" />
      </Field>
    </Fields>
    <Divider />
    <Fields $tight>
      <SelectField id="operation" label="操作" icon="body" value="新規ボディ" />
    </Fields>
    <DialogFooter>
      <Icon name="info" />
      <Spacer />
      <PushButton disabled>OK</PushButton>
      <PushButton type="button">キャンセル</PushButton>
    </DialogFooter>
  </Dialog>
);

const BrowserTree = () => (
  <Dock>
    <DockHeader>
      <Icon name="rewind" />
      <DockTitle>ブラウザ</DockTitle>
      <Icon name="minus" />
      <Grip />
    </DockHeader>
    <Tree>
      <TreeRow $indent={14}>
        <Icon name="open" />
        <Chip $edited $flush>
          <Icon name="eye" />
          <ItemName $tone="#8f8f8f"><Icon name="box" />DT115B v48</ItemName>
          <Icon name="radio" />
        </Chip>
      </TreeRow>
      {tree.map((row) => {
        const last = row.icons[row.icons.length - 1];
        return (
          <TreeRow key={row.name} $indent={row.leaf ? row.indent : row.indent - 4}>
            {!row.leaf && <Icon name={row.open ? "open" : "closed"} />}
            <Chip $flush={!!row.tone}>
              {row.icons.length > 1 && <Icon name={row.icons[0]} />}
              <ItemName $tone={row.tone} $hatched={row.hatched}><Icon name={last} />{row.name}</ItemName>
            </Chip>
          </TreeRow>
        );
      })}
    </Tree>
  </Dock>
);

export default function App() {
  return (
    <Page>
      <Global />
      <TitleBar>
        <AppMark viewBox="0 0 15 15" aria-hidden="true">
          <path d="M0 0h15v15H0z" fill="#f9d9bd" />
          <path d="M5 2h8v3H8v2h4v2H8v4H5z" fill="#b8560c" />
          <path d="M3 2h2v11H3zM9 13h5v1H9z" fill="#f08a30" />
        </AppMark>
        <AppName>Autodesk Fusion 360</AppName>
        <WindowButton aria-label="最小化"><Icon name="min" /></WindowButton>
        <WindowButton aria-label="元に戻す"><Icon name="restore" /></WindowButton>
        <WindowButton aria-label="閉じる"><Icon name="winClose" /></WindowButton>
      </TitleBar>

      <DocumentBar>
        <QuickAccess>
          <QuickButton aria-label="データ パネル"><Icon name="grid" /></QuickButton>
          <QuickButton aria-label="ファイル"><Icon name="file" /><Caret /></QuickButton>
          <QuickButton aria-label="保存"><Icon name="save" /></QuickButton>
          <QuickPair>
            <QuickButton aria-label="元に戻す"><Icon name="undo" /><Caret /></QuickButton>
            <QuickButton aria-label="やり直し"><Icon name="redo" /><Caret /></QuickButton>
          </QuickPair>
        </QuickAccess>
        <DocumentTab>
          <DocumentName><Icon name="cubeDark" />DT115B v48*</DocumentName>
          <button aria-label="タブを閉じる"><Icon name="close" /></button>
        </DocumentTab>
        <NewTab aria-label="新しいデザイン"><Icon name="plus" /></NewTab>
        <AccountTools>
          <button aria-label="拡張機能"><Icon name="plug" /></button>
          <button aria-label="ジョブ ステータス"><Icon name="clock" /></button>
          <button aria-label="通知"><Icon name="bell" /></button>
          <button aria-label="ヘルプ"><Icon name="help" /></button>
        </AccountTools>
      </DocumentBar>

      <Ribbon>
        <Workspace>デザイン<Caret /></Workspace>
        <RibbonMain>
          <TabList>
            {tabs.map((t, i) => <RibbonTab key={t} $on={i === 0}>{t}</RibbonTab>)}
          </TabList>
          <Groups>
            {groups.map(([label, tools]) => (
              <Group key={label}>
                <Tools>{tools.map((t) => <Tool key={t} aria-label={label}><BigIcon name={t} /></Tool>)}</Tools>
                <GroupMenu>{label}<Caret /></GroupMenu>
              </Group>
            ))}
          </Groups>
        </RibbonMain>
      </Ribbon>

      <Canvas>
        <Model />
        <BrowserTree />
        <ValueEditor>
          <ValueHandle />
          <ValueInput aria-label="距離" defaultValue="-1.733 mm" />
          <svg width="4" height="13" viewBox="0 0 4 13" aria-hidden="true">
            <path d="M1 0h2v3H1zM1 5h2v3H1zM1 10h2v3H1z" fill="#666" />
          </svg>
        </ValueEditor>
        <FeatureDialog />
        <Dock $bottom>
          <DockHeader>
            <DockTitle $indent>コメント</DockTitle>
            <Icon name="add" />
            <Grip />
          </DockHeader>
        </Dock>
        <NavBar>
          {nav.map(([name, menu]) => (
            <NavButton key={name} aria-label={name}><Icon name={name} />{menu && <Caret />}</NavButton>
          ))}
        </NavBar>
        <Status>1 プロファイル | 面積 : 26.04 mm^2</Status>
      </Canvas>

      <Timeline>
        <Handle />
        <Player>
          {["first", "back", "play", "next", "last"].map((n) => (
            <button key={n} aria-label={n}><Icon name={n} /></button>
          ))}
        </Player>
        <Track>
          {steps.map((name, i) => (
            <Step key={i} $edited={i < 10} $first={i === 0}>
              <StepButton $on={i === 8} $later={i > 9} aria-label={name}><Icon name={name} /></StepButton>
            </Step>
          ))}
        </Track>
        <Settings aria-label="設定"><Icon name="gear" /></Settings>
      </Timeline>
    </Page>
  );
}
